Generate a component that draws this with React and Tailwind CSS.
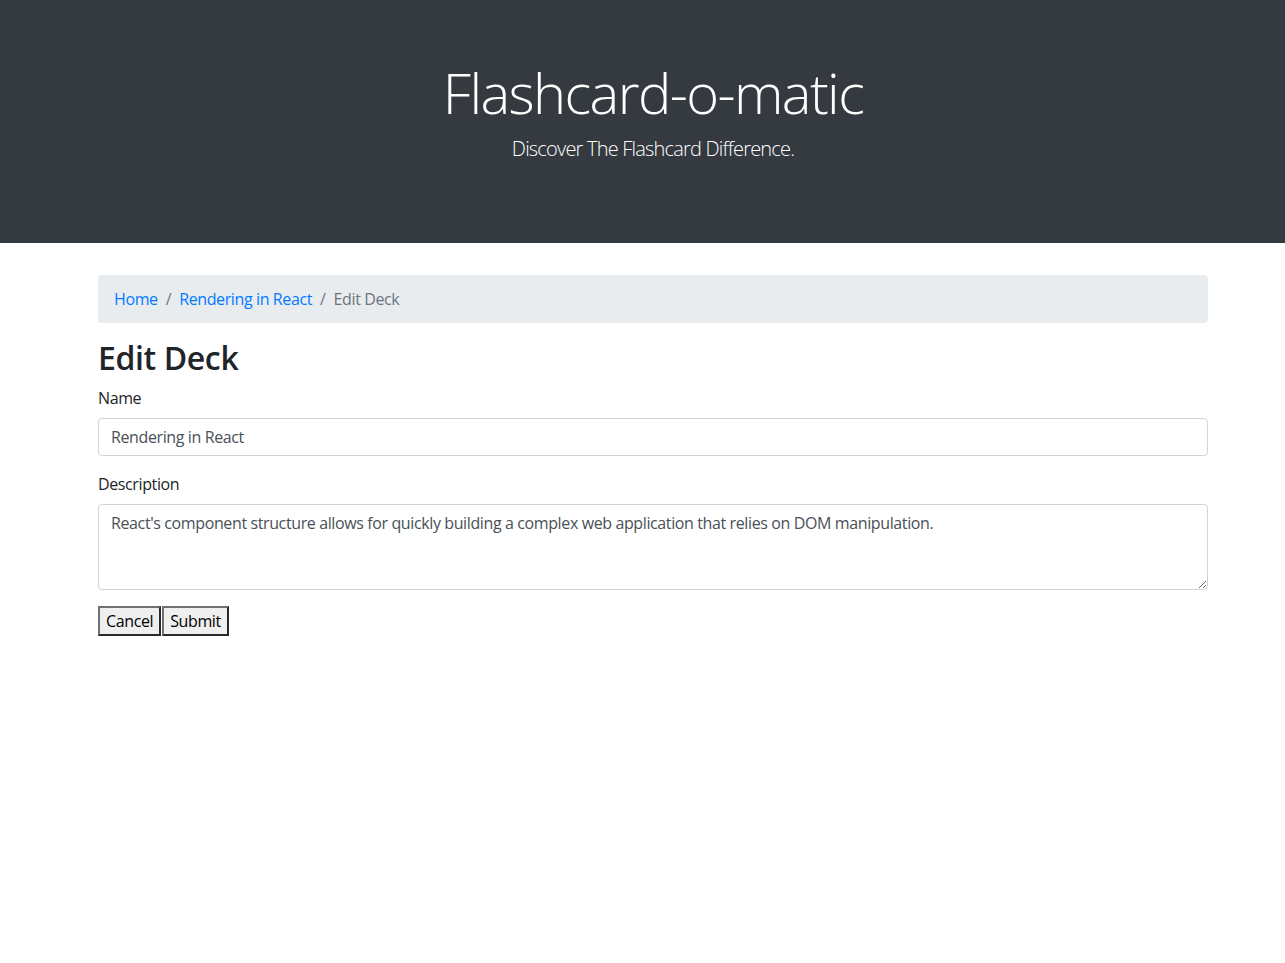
import React from 'react';

const font = { fontFamily: '"Open Sans", "Noto Sans", sans-serif' };

const btn =
  'bg-[#efefef] border-2 border-solid border-t-[#707070] border-l-[#707070] border-b-[#2a2a2a] border-r-[#2a2a2a] px-[6px] py-px leading-6 text-black tracking-[-0.024em]';

export default function App() {
  return (
    <div className="min-h-[963px] bg-white text-[#212529] text-base tracking-[-0.024em]" style={font}>
      {/* Header */}
      <header className="h-[243px] bg-[#343a40] text-white">
        <div className="w-[1110px] ml-[98px] pt-[59px] text-center">
          <h1 className="text-[56px] font-light leading-[1.2] mb-2 tracking-[-0.028em]">Flashcard-o-matic</h1>
          <p className="text-[20px] font-light leading-[1.5] tracking-[-0.04em]">Discover The Flashcard Difference.</p>
        </div>
      </header>

      <main className="w-[1110px] ml-[98px] mt-8">
        <nav className="bg-[#e9ecef] rounded px-4 py-3 leading-6 flex items-center mb-4">
          <a href="#" className="text-[#007bff]">Home</a>
          <span className="px-2 text-[#6c757d]">/</span>
          <a href="#" className="text-[#007bff]">Rendering in React</a>
          <span className="px-2 text-[#6c757d]">/</span>
          <span className="text-[#6c757d]">Edit Deck</span>
        </nav>

        <h2 className="text-[32px] font-semibold leading-[1.2] mt-px mb-[9px]">Edit Deck</h2>

        <form>
          <div className="mb-4">
            <label className="block leading-6 mb-2">Name</label>
            <input
              type="text"
              defaultValue="Rendering in React"
              className="block w-full h-[38px] px-3 py-1.5 border border-[#ced4da] rounded text-[#495057] leading-6 tracking-[-0.024em]"
            />
          </div>
          <div className="mb-4">
            <label className="block leading-6 mb-2">Description</label>
            <textarea
              rows={3}
              defaultValue="React's component structure allows for quickly building a complex web application that relies on DOM manipulation."
              className="block w-full h-[86px] px-3 py-1.5 border border-[#ced4da] rounded text-[#495057] leading-6 tracking-[-0.024em]"
            />
          </div>
          <div className="flex gap-[1px]">
            <button type="button" className={btn}>Cancel</button>
            <button type="submit" className={btn}>Submit</button>
          </div>
        </form>
      </main>
    </div>
  );
}
